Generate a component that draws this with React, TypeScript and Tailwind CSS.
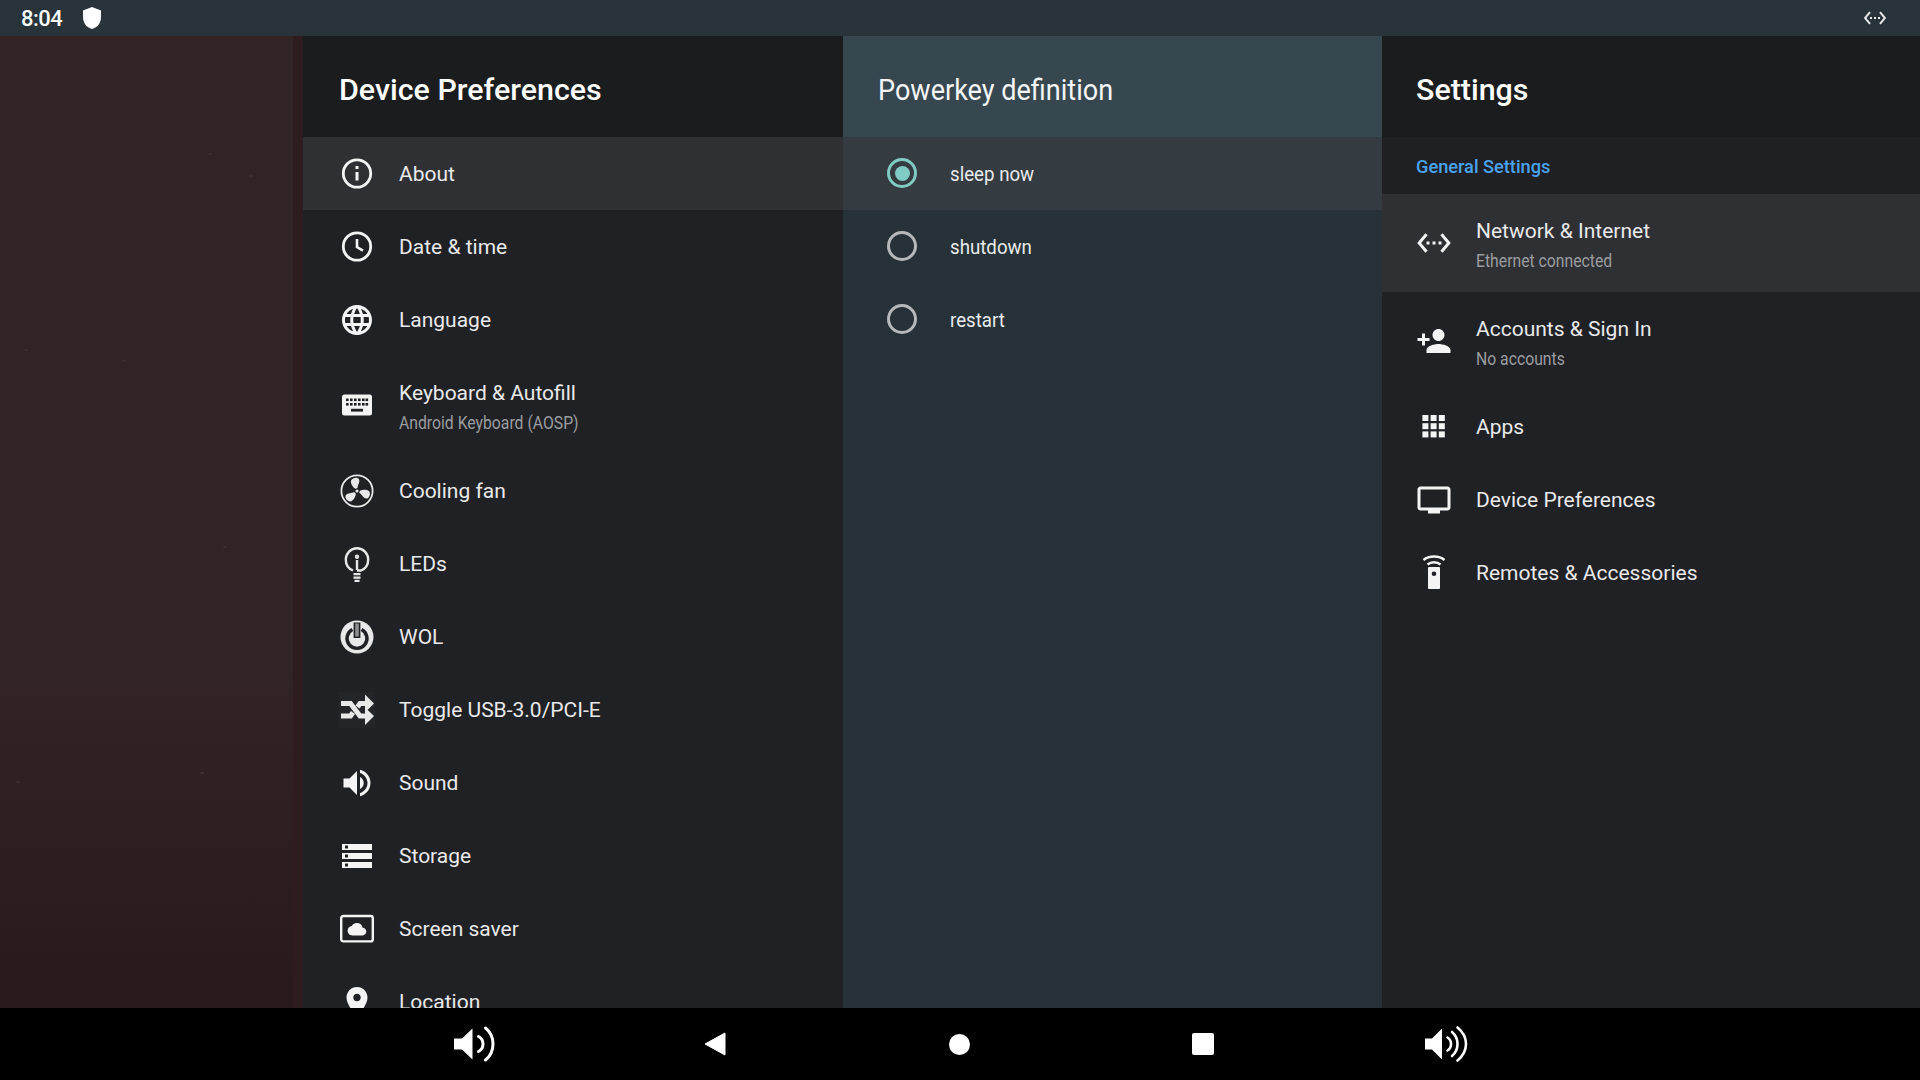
import type { ReactNode } from "react";

const base = "fill-[#f4f4f4]";

function Icon({ children, stroke }: { children: ReactNode; stroke?: boolean }) {
  return (
    <svg viewBox="0 0 36 36" className={`h-9 w-9 shrink-0 ${stroke ? "fill-none stroke-[#f4f4f4]" : base}`}>
      {children}
    </svg>
  );
}

function Mat({ d }: { d: string }) {
  return (
    <svg viewBox="0 0 24 24" className={`h-9 w-9 shrink-0 ${base}`}>
      <path d={d} />
    </svg>
  );
}

const ETHERNET =
  "M7.77 6.76L6.23 5.48.82 12l5.41 6.52 1.54-1.28L3.42 12l4.35-5.24zM7 13h2v-2H7v2zm10-2h-2v2h2v-2zm-6 2h2v-2h-2v2zm6.77-7.52l-1.54 1.28L20.58 12l-4.35 5.24 1.54 1.28L23.18 12l-5.41-6.52z";

const InfoIcon = () => (
  <Icon stroke>
    <circle cx="18" cy="17.5" r="13.7" strokeWidth="2.8" />
    <path d="M18 16V24.5" strokeWidth="3" />
    <path d="M18 10V13" strokeWidth="3" />
  </Icon>
);

const ClockIcon = () => (
  <Icon stroke>
    <circle cx="18" cy="17.5" r="13.7" strokeWidth="2.8" />
    <path d="M18 10V18.1L24 21.7" strokeWidth="2.6" />
  </Icon>
);

const GlobeIcon = () => (
  <Mat d="M11.99 2C6.47 2 2 6.48 2 12s4.47 10 9.99 10C17.52 22 22 17.52 22 12S17.52 2 11.99 2zm6.93 6h-2.95c-.32-1.25-.78-2.45-1.38-3.56 1.84.63 3.37 1.91 4.33 3.56zM12 4.04c.83 1.2 1.48 2.53 1.91 3.96h-3.82c.43-1.43 1.08-2.76 1.91-3.96zM4.26 14C4.1 13.36 4 12.69 4 12s.1-1.36.26-2h3.38c-.08.66-.14 1.32-.14 2 0 .68.06 1.34.14 2H4.26zm.82 2h2.95c.32 1.25.78 2.45 1.38 3.56-1.84-.63-3.37-1.9-4.33-3.56zm2.95-8H5.08c.96-1.66 2.49-2.93 4.33-3.56C8.81 5.55 8.35 6.75 8.03 8zM12 19.96c-.83-1.2-1.48-2.53-1.91-3.96h3.82c-.43 1.43-1.08 2.76-1.91 3.96zM14.34 14H9.66c-.09-.66-.16-1.32-.16-2 0-.68.07-1.35.16-2h4.68c.09.65.16 1.32.16 2 0 .68-.07 1.34-.16 2zm.25 5.56c.6-1.11 1.06-2.31 1.38-3.56h2.95c-.96 1.65-2.49 2.93-4.33 3.56zM16.36 14c.08-.66.14-1.32.14-2 0-.68-.06-1.34-.14-2h3.38c.16.64.26 1.31.26 2s-.1 1.36-.26 2h-3.38z" />
);

const KeyboardIcon = () => (
  <Icon>
    <rect x="3" y="7.5" width="30" height="21" rx="2.5" />
    <g className="fill-[#202125]">
      {[7, 11, 15, 19, 23, 26.5].map((x) => (
        <g key={x}>
          <rect x={x} y="11.5" width="2.6" height="2.6" />
          <rect x={x} y="16" width="2.6" height="2.6" />
        </g>
      ))}
      <rect x="12" y="21.8" width="12" height="2.8" />
    </g>
  </Icon>
);

const FanIcon = () => (
  <Icon>
    <circle cx="18" cy="18" r="15.6" className="fill-none stroke-[#e8e8e8]" strokeWidth="1.8" />
    {[-15, 105, 225].map((r) => (
      <path
        key={r}
        transform={`rotate(${r} 18 18)`}
        className="fill-[#e8e8e8]"
        d="M17 15.4C14.5 12.5 13.6 8 15.2 6C17.5 3.6 22.8 4.4 23 7.6C23.2 10.6 20.2 12 19.2 15.4C18.5 15.1 17.7 15.1 17 15.4Z"
      />
    ))}
    <circle cx="18" cy="18" r="1.6" className="fill-[#e8e8e8]" />
  </Icon>
);

const LedIcon = () => (
  <Icon stroke>
    <g className="stroke-[#e8e8e8]">
      <path d="M14 24.5C9.5 22.8 6.8 18.6 6.8 13.6C6.8 7.4 11.8 2.2 18 2.2S29.2 7.4 29.2 13.6C29.2 18.6 26.5 22.8 22 24.5H18" strokeWidth="2.4" />
      <path d="M18 14V24" strokeWidth="2.4" />
      <circle cx="18" cy="10.8" r="1.3" strokeWidth="1.8" />
      <path d="M14.5 28.2H21.5M14.5 31.6H21.5M15.5 34.8H20.5" strokeWidth="2.2" />
    </g>
  </Icon>
);

const WolIcon = () => (
  <Icon>
    <circle cx="18" cy="18" r="16.5" className="fill-[#e8e8e8]" />
    <path d="M13.4 10.5A10 10 0 1 0 22.6 10.5" className="fill-none stroke-[#202125]" strokeWidth="3.4" />
    <rect x="14.6" y="3.5" width="6.8" height="15.5" className="fill-[#202125]" />
    <rect x="16.2" y="4.5" width="3.6" height="13" className="fill-[#8d8e90]" />
  </Icon>
);

const ShuffleIcon = () => (
  <svg viewBox="0 0 36 36" className="h-9 w-9 shrink-0 bg-[#242528]">
    <g className="fill-none stroke-[#e8e8e8]" strokeWidth="5">
      <path d="M2 11.5H11.5L21 24H28" />
      <path d="M2 24H11.5L14 20.5" />
      <path d="M18.5 15L21 11.5H28" />
    </g>
    <path d="M26 2.5L35 11.5L26 20.5ZM26 15.5L35 24L26 33Z" className="fill-[#e8e8e8]" />
  </svg>
);

const SoundIcon = () => (
  <Mat d="M3 9v6h4l5 5V4L7 9H3zm13.5 3c0-1.77-1.02-3.29-2.5-4.03v8.05c1.48-.73 2.5-2.25 2.5-4.02zM14 3.23v2.06c2.89.86 5 3.54 5 6.71s-2.11 5.85-5 6.71v2.06c4.01-.91 7-4.49 7-8.77s-2.99-7.86-7-8.77z" />
);

const StorageIcon = () => (
  <Mat d="M2 20h20v-4H2v4zm2-3h2v2H4v-2zM2 4v4h20V4H2zm4 3H4V5h2v2zm-4 7h20v-4H2v4zm2-3h2v2H4v-2z" />
);

const ScreenIcon = () => (
  <Icon>
    <rect x="2.2" y="5" width="31.6" height="25.4" rx="2.2" className="fill-none stroke-[#f4f4f4]" strokeWidth="2.4" />
    <path
      transform="translate(8.6 8.8) scale(.78)"
      d="M19.35 10.04C18.67 6.59 15.64 4 12 4 9.11 4 6.6 5.64 5.35 8.04 2.34 8.36 0 10.91 0 14c0 3.31 2.69 6 6 6h13c2.76 0 5-2.24 5-5 0-2.64-2.05-4.78-4.65-4.96z"
    />
  </Icon>
);

const PlaceIcon = () => (
  <Mat d="M12 2C8.13 2 5 5.13 5 9c0 5.25 7 13 7 13s7-7.75 7-13c0-3.87-3.13-7-7-7zm0 9.5c-1.38 0-2.5-1.12-2.5-2.5s1.12-2.5 2.5-2.5 2.5 1.12 2.5 2.5-1.12 2.5-2.5 2.5z" />
);

const PersonAddIcon = () => (
  <Mat d="M15 12c2.21 0 4-1.79 4-4s-1.79-4-4-4-4 1.79-4 4 1.79 4 4 4zm-9-2V7H4v3H1v2h3v3h2v-3h3v-2H6zm9 4c-2.67 0-8 1.34-8 4v2h16v-2c0-2.66-5.33-4-8-4z" />
);

const AppsIcon = () => (
  <Icon>
    {[6.4, 14.6, 22.8].map((x) =>
      [6, 14.2, 22.4].map((y) => <rect key={`${x}-${y}`} x={x} y={y} width="6" height="6" />)
    )}
  </Icon>
);

const TvIcon = () => (
  <Mat d="M21 3H3c-1.1 0-2 .9-2 2v12c0 1.1.9 2 2 2h5v2h8v-2h5c1.1 0 1.99-.9 1.99-2L23 5c0-1.1-.9-2-2-2zm0 14H3V5h18v12z" />
);

const RemoteIcon = () => (
  <Icon>
    <path d="M7.5 5C13 0.4 23 0.4 28.5 5" className="fill-none stroke-[#f4f4f4]" strokeWidth="2.4" />
    <path d="M11.5 9.5C15 6.5 21 6.5 24.5 9.5" className="fill-none stroke-[#f4f4f4]" strokeWidth="2.4" />
    <path fillRule="evenodd" d="M12 13.2C12 12.5 12.5 12 13.2 12H22.8C23.5 12 24 12.5 24 13.2V33C24 33.6 23.5 34 23 34H13C12.5 34 12 33.6 12 33ZM18 16.4A2.3 2.3 0 1 0 18 21A2.3 2.3 0 1 0 18 16.4Z" />
  </Icon>
);

function Title({ children, condensed }: { children: string; condensed?: boolean }) {
  return (
    <h1
      className={`flex h-[101px] items-center pt-[7px] text-[30.4px] leading-none ${
        condensed ? "origin-left scale-x-[0.89] font-normal text-[#f2f4f5]" : "font-medium text-white"
      }`}
    >
      {children}
    </h1>
  );
}

function RowText({ label, sub }: { label: string; sub?: string }) {
  return (
    <div className={`flex flex-col ${sub ? "pt-[3px]" : ""}`}>
      <span className="text-[21px] leading-[30px] text-[#e9e9ea]">{label}</span>
      {sub && <span className="mt-[1.5px] origin-left scale-x-[0.875] text-[18px] leading-[25px] whitespace-nowrap text-[#9c9d9f]">{sub}</span>}
    </div>
  );
}

function Row({ icon, label, sub, selected }: { icon: ReactNode; label: string; sub?: string; selected?: boolean }) {
  return (
    <div className={`flex shrink-0 items-center gap-6 pl-9 ${sub ? "h-[98px]" : "h-[73px]"} ${selected ? "bg-[#2f3034]" : ""}`}>
      {icon}
      <RowText label={label} sub={sub} />
    </div>
  );
}

function SettingRow({ icon, label, sub, selected }: { icon: ReactNode; label: string; sub?: string; selected?: boolean }) {
  return (
    <div className={`flex shrink-0 items-center gap-6 pl-[34px] ${sub ? "h-[98px]" : "h-[73px]"} ${selected ? "bg-[#2f3034]" : ""}`}>
      {icon}
      <RowText label={label} sub={sub} />
    </div>
  );
}

function Radio({ label, checked }: { label: string; checked?: boolean }) {
  return (
    <div className={`flex h-[73px] shrink-0 items-center gap-[33px] pl-[44px] ${checked ? "bg-[#343c42]" : ""}`}>
      <span className={`mb-[1px] flex h-[30px] w-[30px] items-center justify-center rounded-full border-[3px] ${checked ? "border-[#80cbc4]" : "border-[#b6b9bb]"}`}>
        {checked && <span className="h-[15px] w-[15px] rounded-full bg-[#80cbc4]" />}
      </span>
      <span className="origin-left scale-x-[0.89] text-[21px] leading-[30px] text-[#e9ebec]">{label}</span>
    </div>
  );
}

const specks = [
  "left-[208px] top-[117px]",
  "left-[249px] top-[139px]",
  "left-[24px] top-[313px]",
  "left-[122px] top-[324px]",
  "left-[223px] top-[510px]",
  "left-[16px] top-[745px]",
  "left-[200px] top-[736px]",
];

export default function App() {
  return (
    <div className="flex h-screen w-full flex-col overflow-hidden bg-black [font-family:Roboto,sans-serif]">
      <header className="flex h-9 shrink-0 items-center justify-between bg-[#29343a] pr-[33px] pl-[21px]">
        <div className="flex items-center gap-[20px]">
          <span className="text-[22px] font-medium tracking-[-0.5px] text-white">8:04</span>
          <svg viewBox="0 0 20 24" className="h-6 w-5 fill-white">
            <path d="M10 1L19 4.5V11C19 17 15.5 21.5 10 23C4.5 21.5 1 17 1 11V4.5Z" />
          </svg>
        </div>
        <svg viewBox="0 0 24 24" className="h-6 w-6 fill-[#e6e8e9]">
          <path d={ETHERNET} />
        </svg>
      </header>

      <main className="flex min-h-0 flex-1">
        <div className="relative w-[303px] shrink-0 bg-[linear-gradient(180deg,#322324_0%,#322324_65%,#2a191b_100%)]">
          <div className="absolute inset-y-0 right-0 w-[10px] bg-[#2e1c1f]" />
          {specks.map((s) => (
            <span key={s} className={`absolute h-[2px] w-[4px] rounded-full bg-[#3b2f31] ${s}`} />
          ))}
        </div>

        <section className="flex w-[540px] shrink-0 flex-col overflow-hidden bg-[#202125]">
          <div className="bg-[#1b1c1e] pl-9">
            <Title>Device Preferences</Title>
          </div>
          <Row selected icon={<InfoIcon />} label="About" />
          <Row icon={<ClockIcon />} label="Date & time" />
          <Row icon={<GlobeIcon />} label="Language" />
          <Row icon={<KeyboardIcon />} label="Keyboard & Autofill" sub="Android Keyboard (AOSP)" />
          <Row icon={<FanIcon />} label="Cooling fan" />
          <Row icon={<LedIcon />} label="LEDs" />
          <Row icon={<WolIcon />} label="WOL" />
          <Row icon={<ShuffleIcon />} label="Toggle USB-3.0/PCI-E" />
          <Row icon={<SoundIcon />} label="Sound" />
          <Row icon={<StorageIcon />} label="Storage" />
          <Row icon={<ScreenIcon />} label="Screen saver" />
          <Row icon={<PlaceIcon />} label="Location" />
        </section>

        <section className="flex w-[539px] shrink-0 flex-col overflow-hidden bg-[#263238]">
          <div className="bg-[#37474f] pl-[35px]">
            <Title condensed>Powerkey definition</Title>
          </div>
          <Radio checked label="sleep now" />
          <Radio label="shutdown" />
          <Radio label="restart" />
        </section>

        <section className="flex flex-1 flex-col overflow-hidden bg-[#202125]">
          <div className="bg-[#1b1c1e] pl-[34px]">
            <Title>Settings</Title>
          </div>
          <div className="flex h-[57px] items-center bg-[#1f2023] pt-[2px] pl-[34px] text-[18.2px] font-medium text-[#4aa3f0]">General Settings</div>
          <SettingRow selected icon={<Mat d={ETHERNET} />} label="Network & Internet" sub="Ethernet connected" />
          <SettingRow icon={<PersonAddIcon />} label="Accounts & Sign In" sub="No accounts" />
          <SettingRow icon={<AppsIcon />} label="Apps" />
          <SettingRow icon={<TvIcon />} label="Device Preferences" />
          <SettingRow icon={<RemoteIcon />} label="Remotes & Accessories" />
        </section>
      </main>

      <nav className="flex h-[72px] shrink-0 items-center justify-center">
        <div className="flex w-[243px] justify-center">
          <svg viewBox="0 0 42 36" className="h-9 w-[42px] fill-white">
            <path d="M1 12.5V23.5H9L19.5 33.5V2.5L9 12.5Z" />
            <path d="M25.5 10.5C28.5 12 30 15 30 18S28.5 24 25.5 25.5" className="fill-none stroke-white" strokeWidth="3" strokeLinecap="round" />
            <path d="M32.5 2C37.5 6 40 11.5 40 18S37.5 30 32.5 34" className="fill-none stroke-white" strokeWidth="3" strokeLinecap="round" />
          </svg>
        </div>
        <div className="flex w-[243px] justify-center pr-[4px]">
          <svg viewBox="0 0 22 24" className="h-6 w-[22px] fill-white">
            <path d="M21 1V23L1 12Z" stroke="white" strokeWidth="1" strokeLinejoin="round" />
          </svg>
        </div>
        <div className="flex w-[243px] justify-center pr-[2px]">
          <span className="h-[21px] w-[21px] rounded-full bg-white" />
        </div>
        <div className="flex w-[243px] justify-center">
          <span className="h-[22px] w-[22px] rounded-[2px] bg-white" />
        </div>
        <div className="flex w-[243px] justify-center">
          <svg viewBox="0 0 44 36" className="h-9 w-[44px] fill-white">
            <path d="M1 12.5V23.5H8L18 33.5V2.5L8 12.5Z" />
            <path d="M23.5 11.5C26 13 27 15.5 27 18S26 23 23.5 24.5" className="fill-none stroke-white" strokeWidth="2.6" strokeLinecap="round" />
            <path d="M28 6C31.5 9 33.5 13.5 33.5 18S31.5 27 28 30" className="fill-none stroke-white" strokeWidth="2.6" strokeLinecap="round" />
            <path d="M33.5 1.5C39 6 42 11.5 42 18S39 30 33.5 34.5" className="fill-none stroke-white" strokeWidth="2.6" strokeLinecap="round" />
          </svg>
        </div>
      </nav>
    </div>
  );
}
